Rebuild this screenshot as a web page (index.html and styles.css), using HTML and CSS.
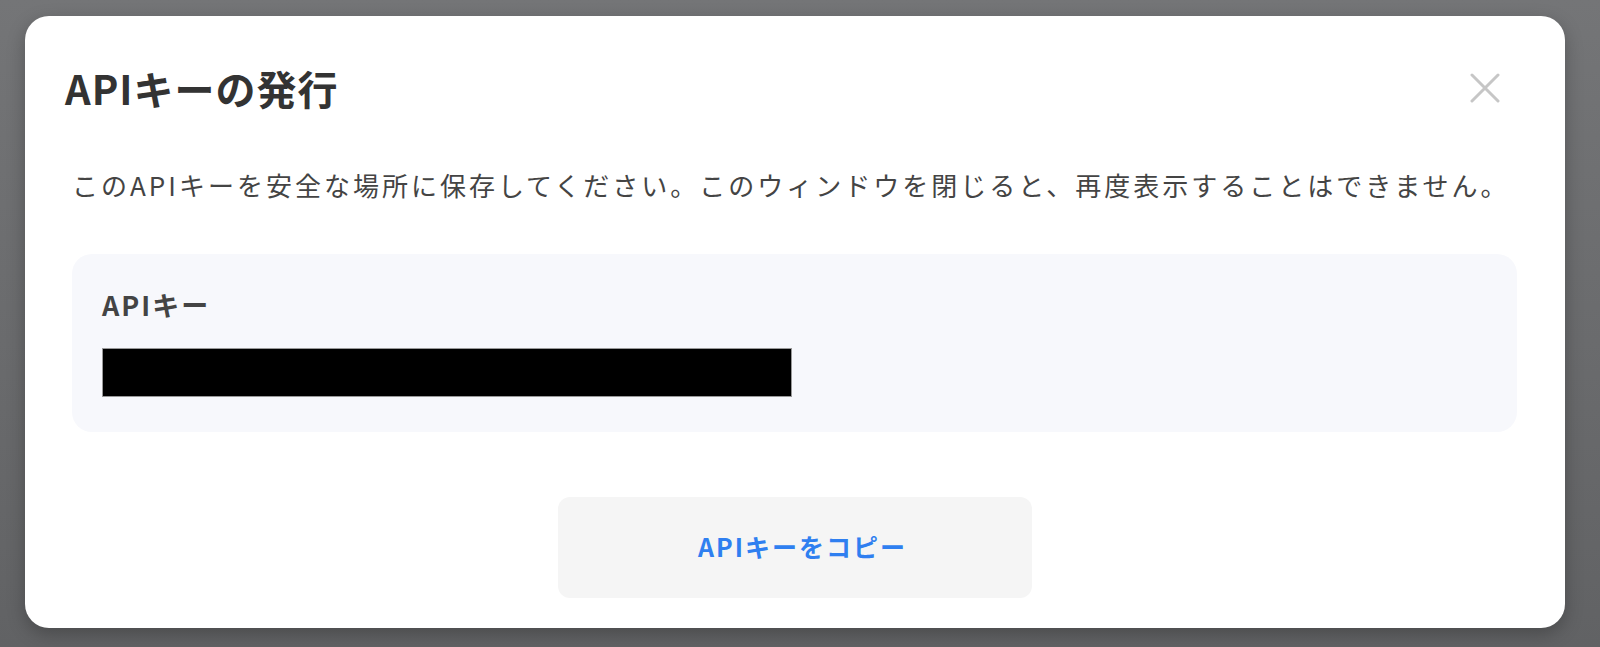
FILE: index.html
```html
<!DOCTYPE html>
<html lang="ja">
<head>
    <meta charset="UTF-8">
    <meta name="viewport" content="width=device-width, initial-scale=1.0">
    <title>APIキーの発行</title>
    <link rel="stylesheet" href="styles.css">
</head>
<body>
    <div class="overlay">
        <div class="modal">
            <div class="modal-header">
                <h1 class="modal-title">APIキーの発行</h1>
                <button type="button" class="close-button" aria-label="閉じる">
                    <svg width="30" height="30" viewBox="0 0 30 30">
                        <path d="M2 2 L28 28 M28 2 L2 28" stroke="#c6c6c6" stroke-width="3" stroke-linecap="round" fill="none"/>
                    </svg>
                </button>
            </div>

            <p class="notice">このAPIキーを安全な場所に保存してください。このウィンドウを閉じると、再度表示することはできません。</p>

            <div class="key-box">
                <div class="key-label">APIキー</div>
                <div class="key-value"></div>
            </div>

            <div class="actions">
                <button type="button" class="copy-button">APIキーをコピー</button>
            </div>
        </div>
    </div>
</body>
</html>
```

FILE: styles.css
```css
html, body {
    margin: 0;
    height: 100%;
}
body {
    font-family: "Noto Sans CJK JP", "Noto Sans", sans-serif;
    background: linear-gradient(to bottom, #747577, #616264);
    overflow: hidden;
}
.overlay {
    padding: 16px 35px 0 25px;
}
.modal {
    background-color: #fff;
    border-radius: 24px;
    padding: 44px 48px 31px 47px;
    box-shadow: 0 6px 18px rgba(0,0,0,0.25);
    height: 537px;
}
.modal-header {
    display: flex;
    justify-content: space-between;
    align-items: center;
}
.modal-title {
    margin: 0 0 0 -7px;
    font-size: 40px;
    line-height: 56px;
    font-weight: bold;
    letter-spacing: 1px;
    color: #333;
}
.close-button {
    border: none;
    background: none;
    padding: 0;
    margin-right: 17px;
    width: 30px;
    height: 30px;
    cursor: pointer;
}
.notice {
    margin: 52px 0 0 0;
    font-size: 26px;
    line-height: 34px;
    color: #444;
    letter-spacing: 3px;
    white-space: nowrap;
}
.key-box {
    margin-top: 52px;
    background-color: #f7f8fc;
    border-radius: 20px;
    padding: 33px 30px 30px 30px;
    height: 115px;
}
.key-label {
    font-size: 27px;
    line-height: 36px;
    font-weight: bold;
    letter-spacing: 2px;
    color: #444;
}
.key-value {
    margin-top: 25px;
    width: 688px;
    height: 47px;
    background-color: #000;
    border: 1px solid #999;
}
.actions {
    display: flex;
    justify-content: center;
    margin-top: 65px;
}
.copy-button {
    width: 474px;
    height: 101px;
    border: none;
    border-radius: 12px;
    background-color: #f5f5f5;
    color: #2f7ff0;
    font-family: inherit;
    font-size: 25px;
    font-weight: bold;
    letter-spacing: 2px;
    padding: 0 0 4px 16px;
    cursor: pointer;
}
```
